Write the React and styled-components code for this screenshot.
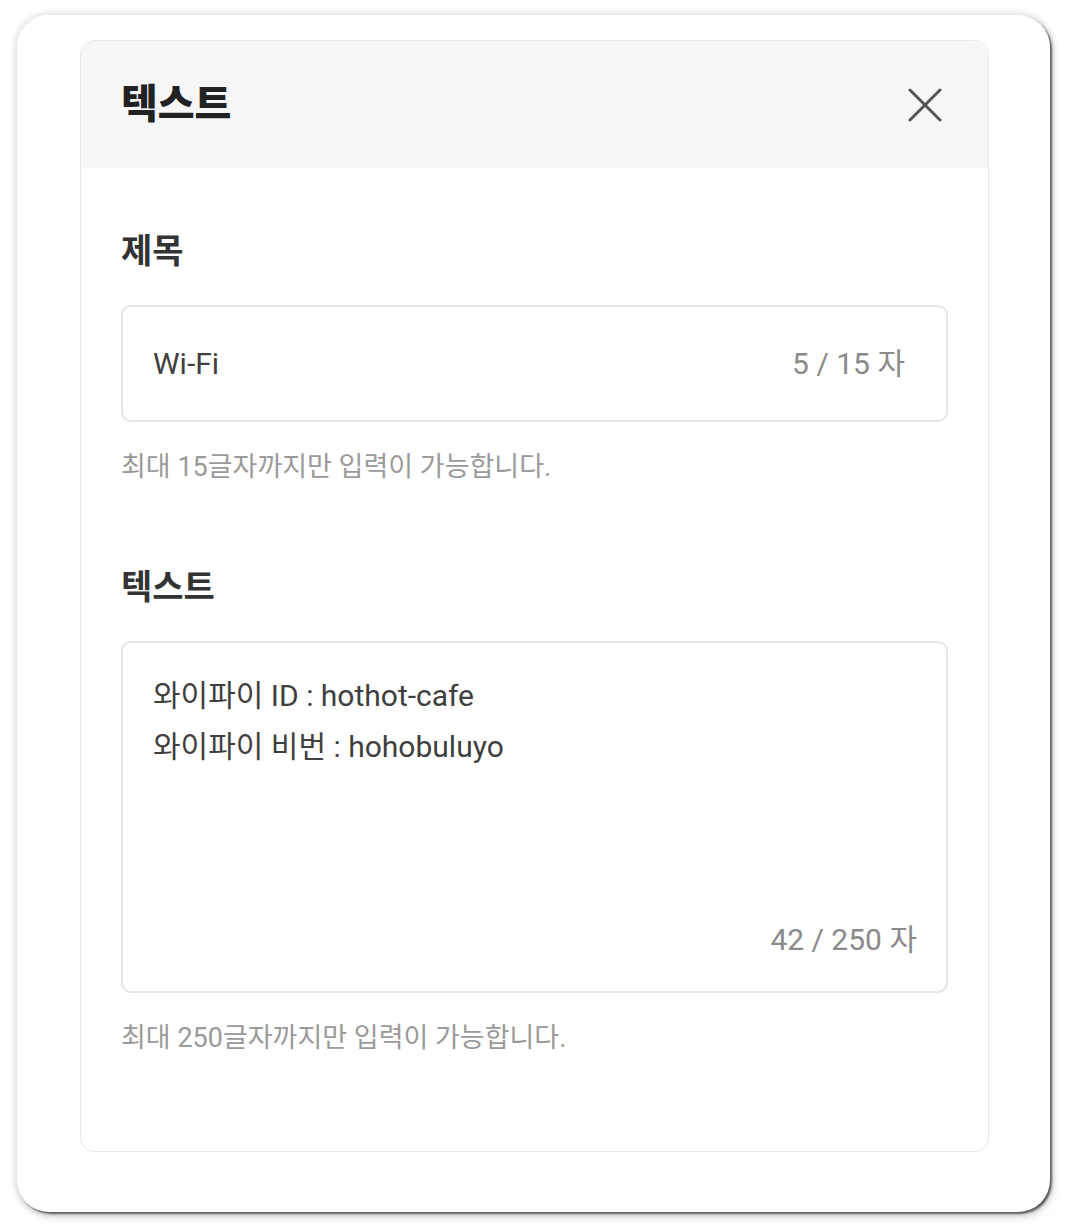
import React from 'react'
import styled, { createGlobalStyle } from 'styled-components'

const GlobalStyle = createGlobalStyle`
  html, body {
    margin: 0;
    padding: 0;
    background: #fff;
  }
  body {
    min-height: 1232px;
    font-family: Roboto, "Noto Sans CJK KR", sans-serif;
    -webkit-font-smoothing: antialiased;
  }
  * {
    box-sizing: border-box;
  }
`

const Frame = styled.div`
  width: 1033px;
  height: 1197px;
  margin: 15px 0 0 17px;
  background: #fff;
  border-radius: 32px;
  box-shadow: 0 0 4px 4px rgba(0, 0, 0, 0.07), 2px 2px 2px rgba(0, 0, 0, 0.55),
    3px 5px 8px rgba(0, 0, 0, 0.15);
  padding: 25px 0 0 63px;
`

const Card = styled.section`
  width: 909px;
  height: 1112px;
  border: 1px solid #e9e9ea;
  border-radius: 14px;
  overflow: hidden;
  background: #fff;
`

const Header = styled.header`
  height: 127px;
  background: #f6f6f7;
  display: flex;
  align-items: center;
  justify-content: space-between;
  padding: 0 46px 0 40px;
`

const Title = styled.h1`
  margin: 0;
  font-size: 40px;
  font-weight: 800;
  color: #222;
  line-height: 1;
`

const CloseButton = styled.button`
  border: 0;
  background: none;
  padding: 0;
  width: 34px;
  height: 34px;
  display: flex;
  align-items: center;
  justify-content: center;
  cursor: pointer;
  color: #555;
`

const Body = styled.div`
  padding: 61px 40px 0 40px;
`

const Label = styled.h2`
  margin: 0 0 32px;
  font-size: 34px;
  line-height: 44px;
  font-weight: 700;
  color: #333;
`

const Field = styled.div`
  height: 117px;
  border: 2px solid #e4e4e5;
  border-radius: 10px;
  display: flex;
  align-items: center;
  padding: 0 41px 0 30px;
  gap: 20px;
`

const TextInput = styled.input`
  flex: 1;
  min-width: 0;
  border: 0;
  outline: none;
  padding: 0;
  background: none;
  font-family: inherit;
  font-size: 30px;
  color: #3f3f3f;
`

const Counter = styled.span`
  font-size: 30px;
  line-height: 36px;
  color: #8a8a8a;
  white-space: nowrap;
`

const AreaField = styled.div`
  height: 352px;
  border: 2px solid #e4e4e5;
  border-radius: 10px;
  display: flex;
  flex-direction: column;
  padding: 27px 29px 33px 30px;
`

const TextArea = styled.textarea`
  flex: 1;
  border: 0;
  outline: none;
  resize: none;
  padding: 0;
  background: none;
  font-family: inherit;
  font-size: 30px;
  line-height: 51px;
  color: #3f3f3f;
  overflow: hidden;
`

const AreaCounter = styled(Counter)`
  align-self: flex-end;
`

const Help = styled.p`
  margin: 27px 0 0;
  font-size: 27px;
  line-height: 36px;
  color: #9a9a9a;
`

const Section = styled.div`
  & + & {
    margin-top: 80px;
  }
`

const CloseIcon = () => (
  <svg width="34" height="34" viewBox="0 0 34 34" fill="none">
    <path
      d="M2 2L32 32M32 2L2 32"
      stroke="currentColor"
      strokeWidth="3"
      strokeLinecap="round"
    />
  </svg>
)

const App = () => {
  const title = 'Wi-Fi'
  const text = '와이파이 ID : hothot-cafe\n와이파이 비번 : hohobuluyo'

  return (
    <>
      <GlobalStyle />
      <Frame>
        <Card>
          <Header>
            <Title>텍스트</Title>
            <CloseButton aria-label="닫기">
              <CloseIcon />
            </CloseButton>
          </Header>
          <Body>
            <Section>
              <Label>제목</Label>
              <Field>
                <TextInput value={title} readOnly />
                <Counter>{title.length} / 15 자</Counter>
              </Field>
              <Help>최대 15글자까지만 입력이 가능합니다.</Help>
            </Section>
            <Section>
              <Label>텍스트</Label>
              <AreaField>
                <TextArea value={text} readOnly />
                <AreaCounter>42 / 250 자</AreaCounter>
              </AreaField>
              <Help>최대 250글자까지만 입력이 가능합니다.</Help>
            </Section>
          </Body>
        </Card>
      </Frame>
    </>
  )
}

export default App
